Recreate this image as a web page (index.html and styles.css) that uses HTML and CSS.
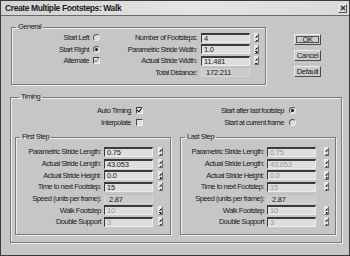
FILE: index.html
```html
<!DOCTYPE html>
<html lang="en">
<head>
    <meta charset="UTF-8">
    <title>Create Multiple Footsteps: Walk</title>
    <link rel="stylesheet" href="styles.css">
</head>
<body>

<div class="dialog">
    <div class="titlebar">
        <span class="title">Create Multiple Footsteps: Walk</span>
        <span class="close">
            <svg width="6" height="6" viewBox="0 0 6 6"><path d="M1 1L5 5M5 1L1 5" stroke="#333" stroke-width="1.2"/></svg>
        </span>
    </div>

    <div class="content">
        <!-- General + buttons -->
        <div class="top">
            <fieldset class="group general">
                <legend>General</legend>
                <div class="general-grid">
                    <span class="opt-label">Start Left</span><span class="box"><i class="radio"></i></span>
                    <span class="lbl">Number of Footsteps:</span><span class="input">4</span><span class="spin"></span>

                    <span class="opt-label">Start Right</span><span class="box"><i class="radio on"></i></span>
                    <span class="lbl">Parametric Stride Width:</span><span class="input">1.0</span><span class="spin"></span>

                    <span class="opt-label">Alternate</span><span class="box"><i class="check on dim"></i></span>
                    <span class="lbl">Actual Stride Width:</span><span class="input">11.481</span><span class="spin"></span>

                    <span class="opt-label"></span><span class="box"></span>
                    <span class="lbl">Total Distance:</span><span class="value">172.211</span><span></span>
                </div>
            </fieldset>

            <div class="buttons">
                <button class="btn default-btn">OK</button>
                <button class="btn">Cancel</button>
                <button class="btn">Default</button>
            </div>
        </div>

        <!-- Timing -->
        <fieldset class="group timing">
            <legend>Timing</legend>
            <div class="timing-opts">
                <div class="opt-col left">
                    <div class="opt">Auto Timing <i class="check on"></i></div>
                    <div class="opt">Interpolate <i class="check"></i></div>
                </div>
                <div class="opt-col right">
                    <div class="opt">Start after last footstep <i class="radio on"></i></div>
                    <div class="opt">Start at current frame <i class="radio"></i></div>
                </div>
            </div>

            <div class="steps">
                <fieldset class="group step">
                    <legend>First Step</legend>
                    <div class="step-grid">
                        <span class="lbl">Parametric Stride Length:</span><span class="input">0.75</span><span class="spin"></span>
                        <span class="lbl">Actual Stride Length:</span><span class="input">43.053</span><span class="spin"></span>
                        <span class="lbl">Actual Stride Height:</span><span class="input">0.0</span><span class="spin"></span>
                        <span class="lbl">Time to next Footstep:</span><span class="input">15</span><span class="spin"></span>
                        <span class="lbl">Speed (units per frame):</span><span class="value">2.87</span><span></span>
                        <span class="lbl">Walk Footstep</span><span class="input off">10</span><span class="spin"></span>
                        <span class="lbl">Double Support</span><span class="input off">3</span><span class="spin"></span>
                    </div>
                </fieldset>

                <fieldset class="group step last">
                    <legend>Last Step</legend>
                    <div class="step-grid">
                        <span class="lbl">Parametric Stride Length:</span><span class="input off">0.75</span><span class="spin"></span>
                        <span class="lbl">Actual Stride Length:</span><span class="input off">43.053</span><span class="spin"></span>
                        <span class="lbl">Actual Stride Height:</span><span class="input off">0.0</span><span class="spin"></span>
                        <span class="lbl">Time to next Footstep:</span><span class="input off">15</span><span class="spin"></span>
                        <span class="lbl">Speed (units per frame):</span><span class="value">2.87</span><span></span>
                        <span class="lbl">Walk Footstep</span><span class="input off">10</span><span class="spin"></span>
                        <span class="lbl">Double Support</span><span class="input off">3</span><span class="spin"></span>
                    </div>
                </fieldset>
            </div>
        </fieldset>
    </div>
</div>

</body>
</html>
```

FILE: styles.css
```css
:root {
    --face: #c6c6c6;
    --field: #dedede;
    --shadow: #7a7a7a;
    --dark: #3a3a3a;
    --light: #ececec;
    --text: #1c1c1c;
    --dim: #9a9a9a;
}

* {
    box-sizing: border-box;
}

body {
    margin: 0;
    background: #fff;
    font-family: "Liberation Sans", Arial, sans-serif;
    font-size: 7.5px;
    letter-spacing: -0.5px;
    color: var(--text);
}

.dialog {
    width: 350px;
    height: 256px;
    background: var(--face);
    border: 1px solid var(--dark);
    overflow: hidden;
}

/* title bar */
.titlebar {
    height: 15px;
    display: flex;
    align-items: center;
    justify-content: space-between;
    padding: 0 2px 0 4px;
    background: linear-gradient(to right, #d2d2d2, #e4e4e4 55%, #dadada);
    border-bottom: 1px solid #6a6a6a;
}

.title {
    font-weight: bold;
    font-size: 8.5px;
    letter-spacing: -0.4px;
}

.close {
    width: 9px;
    height: 9px;
    display: flex;
    align-items: center;
    justify-content: center;
    background: #d6d6d6;
    border: 1px solid;
    border-color: var(--light) #555 #555 var(--light);
}

.content {
    padding: 7px 0 0 9px;
}

/* group boxes */
.group {
    margin: 0;
    padding: 0;
    min-width: 0;
    border: 1px solid var(--shadow);
    box-shadow: 1px 1px 0 var(--light), inset 1px 1px 0 var(--light);
}

.group legend {
    padding: 0 2px;
    margin-left: 4px;
    line-height: 8px;
    height: 8px;
}

/* general */
.top {
    display: flex;
    align-items: flex-start;
}

.general {
    width: 255px;
    height: 62px;
    margin-left: 1px;
}

.general-grid {
    display: grid;
    grid-template-columns: 77px 12px 100px 49px 9px;
    grid-auto-rows: 11.5px;
    align-items: center;
    padding-top: 1px;
}

.opt-label,
.lbl {
    text-align: right;
    white-space: nowrap;
}

.box {
    padding-left: 4px;
    display: flex;
    align-items: center;
}

.general .lbl {
    padding-right: 4px;
}

.input,
.value {
    height: 10px;
    line-height: 9px;
    padding-left: 2px;
    white-space: nowrap;
    overflow: hidden;
    letter-spacing: -0.2px;
}

.input {
    background: var(--field);
    border-top: 2px solid var(--dark);
    border-left: 1px solid var(--dark);
    border-bottom: 1px solid var(--light);
    border-right: 1px solid var(--light);
    line-height: 7px;
}

.input.off {
    color: var(--dim);
}

.value {
    background: #cbcbcb;
    border: 1px solid #d6d6d6;
    border-top-color: #bdbdbd;
    padding-left: 4px;
}

/* spinner arrows */
.spin {
    justify-self: end;
    width: 5px;
    height: 9px;
    background:
        linear-gradient(to bottom right, transparent 50%, #222 50%) 0 1px / 2.5px 2.5px no-repeat,
        linear-gradient(to bottom left, transparent 50%, #222 50%) 2.5px 1px / 2.5px 2.5px no-repeat,
        linear-gradient(to top right, transparent 50%, #222 50%) 0 5.5px / 2.5px 2.5px no-repeat,
        linear-gradient(to top left, transparent 50%, #222 50%) 2.5px 5.5px / 2.5px 2.5px no-repeat,
        #e2e2e2;
    border: 1px solid;
    border-color: var(--light) #6c6c6c #6c6c6c var(--light);
}

/* radio + check */
.radio {
    display: inline-block;
    width: 7px;
    height: 7px;
    border-radius: 50%;
    border: 1px solid;
    border-color: #555 #e8e8e8 #e8e8e8 #555;
    background: #dcdcdc;
    vertical-align: middle;
    position: relative;
}

.radio.on::after {
    content: "";
    position: absolute;
    left: 1px;
    top: 1px;
    width: 3px;
    height: 3px;
    border-radius: 50%;
    background: #111;
}

.check {
    display: inline-block;
    width: 7px;
    height: 7px;
    border: 1px solid;
    border-color: #444 #eee #eee #444;
    background: #e0e0e0;
    vertical-align: middle;
    position: relative;
}

.check.on::after {
    content: "";
    position: absolute;
    left: 1px;
    top: -1px;
    width: 2px;
    height: 4px;
    border: solid #111;
    border-width: 0 1.2px 1.2px 0;
    transform: rotate(40deg);
}

.check.dim.on::after {
    border-color: #8a8a8a;
}

/* buttons */
.buttons {
    display: flex;
    flex-direction: column;
    gap: 5px;
    margin-left: 28px;
    padding-top: 11px;
}

.btn {
    width: 27px;
    height: 11px;
    padding: 0;
    font: inherit;
    letter-spacing: -0.3px;
    color: var(--text);
    background: #cbcbcb;
    border: 1px solid;
    border-color: var(--light) #4c4c4c #4c4c4c var(--light);
    line-height: 8px;
}

.default-btn {
    outline: 1px solid #555;
    outline-offset: -3px;
}

/* timing */
.timing {
    width: 332px;
    height: 150px;
    margin-top: 8px;
    padding: 0 4px;
}

.timing-opts {
    display: flex;
    padding-top: 3px;
}

.opt-col {
    display: flex;
    flex-direction: column;
}

.opt-col.left {
    width: 128px;
    align-items: flex-end;
}

.opt-col.right {
    width: 153px;
    align-items: flex-end;
}

.opt {
    height: 12.5px;
    display: flex;
    align-items: center;
    gap: 5px;
    white-space: nowrap;
}

.steps {
    display: flex;
    gap: 9px;
    margin-top: 4px;
}

.step {
    width: 156px;
    height: 102px;
}

.step-grid {
    display: grid;
    grid-template-columns: 85px 49px 10px;
    column-gap: 3px;
    grid-auto-rows: 11.7px;
    align-items: center;
    padding-top: 5px;
}

.step .spin {
    justify-self: start;
    margin-left: 2px;
}

.step.last .step-grid {
    grid-template-columns: 83px 49px 10px;
}

.step.last .spin {
    margin-left: 5px;
}
```
